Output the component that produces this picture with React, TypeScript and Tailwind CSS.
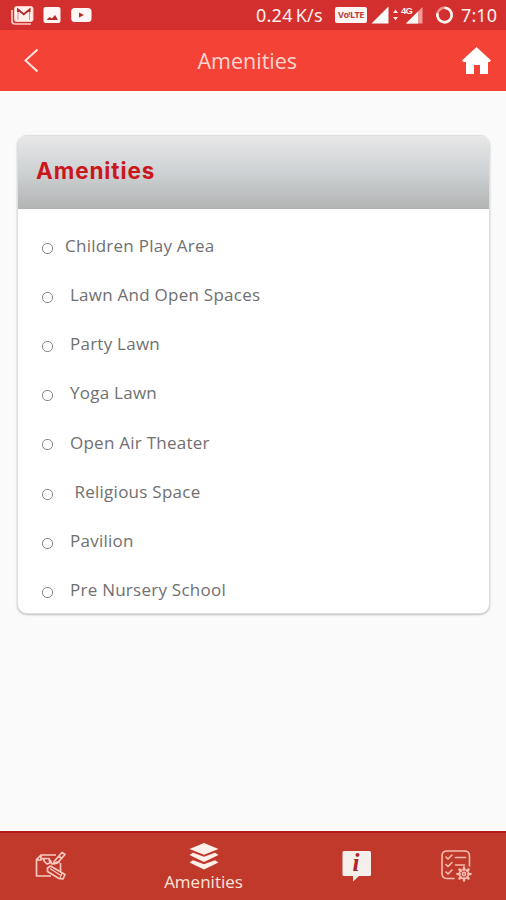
const amenities = [
  { label: 'Children Play Area', pad: 'pl-[12px]' },
  { label: 'Lawn And Open Spaces', pad: 'pl-[17px]' },
  { label: 'Party Lawn', pad: 'pl-[17px]' },
  { label: 'Yoga Lawn', pad: 'pl-[17px]' },
  { label: 'Open Air Theater', pad: 'pl-[17px]' },
  { label: 'Religious Space', pad: 'pl-[21.5px]' },
  { label: 'Pavilion', pad: 'pl-[17px]' },
  { label: 'Pre Nursery School', pad: 'pl-[17px]' },
];

function StatusBar() {
  return (
    <div className="flex h-[30px] shrink-0 items-center bg-[#d32f2f] pl-[11px] text-[#fff0ee]">
      <svg width="24" height="20" viewBox="0 0 24 20" className="shrink-0">
        <path d="M1 5v11q0 3 3 3h16" fill="none" stroke="#ffc9c5" strokeWidth="1.7" />
        <rect x="3.5" y="1.5" width="18.5" height="15" rx="2" fill="#fff0ee" stroke="#ffc9c5" />
        <path d="M7 7V4.500l5.800 4.700 5.800-4.700V7" fill="none" stroke="#b52a2a" strokeWidth="2" />
        <path d="M7 7v8M18.600 7v8" fill="none" stroke="#d98583" strokeWidth="1" />
      </svg>
      <svg width="18" height="18" viewBox="0 0 18 18" className="ml-[8px] shrink-0">
        <rect x="0.5" y="1" width="17" height="16" rx="2" fill="#fff7f5" />
        <path d="M3.500 14l3-3 2.500 1.500 3-3.500 3 5z" fill="#b52a2a" />
      </svg>
      <svg width="21" height="16" viewBox="0 0 21 16" className="ml-[10px] shrink-0">
        <rect x="0.2" y="1" width="20.3" height="14" rx="3.5" fill="#fff7f5" />
        <path d="M8 5.500l5 2.500-5 2.500z" fill="#b52a2a" />
      </svg>
      <span className="ml-[164px] w-[68px] whitespace-nowrap text-[18px] tracking-[0.25px] [word-spacing:-2px]">0.24 K/s</span>
      <div className="ml-[11px] flex h-[16px] w-[32px] shrink-0 items-center justify-center rounded-[2px] bg-[#fff7f5] text-[9px] font-bold tracking-[-0.4px] text-[#b84040]">
        VoᵎLTE
      </div>
      <svg width="19" height="20" viewBox="0 0 19 20" className="ml-[4px] shrink-0">
        <path d="M0.500 18.500L17.500 1.500v17z" fill="#fffdfb" />
      </svg>
      <svg width="5" height="14" viewBox="0 0 5 14" className="ml-[3px] shrink-0">
        <path d="M0 5l2.500-3.500L5 5zM0 9l2.500 3.500L5 9z" fill="#ffe1de" />
      </svg>
      <div className="relative ml-[3px] h-[20px] w-[24px] shrink-0">
        <svg width="24" height="20" viewBox="0 0 24 20">
          <path d="M5 18.500L21.500 2v16.500z" fill="#f19b96" />
          <path d="M5 18.500L17 6.500v12z" fill="#fffdfb" />
        </svg>
        <span className="absolute left-0 top-px font-['Liberation_Sans',sans-serif] text-[9.500px] font-bold leading-[10px] tracking-[-0.8px]">4G</span>
      </div>
      <svg width="19" height="20" viewBox="0 0 19 20" className="ml-[10px] shrink-0">
        <circle cx="9.500" cy="10" r="7.200" fill="none" stroke="#ef918b" strokeWidth="2.500" />
        <path d="M9.500 2.800a7.200 7.200 0 1 1-7 5.600" fill="none" stroke="#fff3f0" strokeWidth="2.600" />
      </svg>
      <span className="ml-[7px] whitespace-nowrap text-[18px] tracking-[0.1px]">7:10</span>
    </div>
  );
}

function PlanIcon() {
  return (
    <svg width="32" height="32" viewBox="0 0 32 32" fill="none" stroke="#f8cabf" strokeWidth="1.700" strokeLinejoin="round">
      <path d="M16 26H1.500V9.500L6 5h15M1.500 10H6V5M25.500 13v9" />
      <path d="M9 8.500h5l1 4.500-3 1-3-3zM15 10l2 4 5-2h3M7 8l2 2" />
      <path d="M19 11.500l8-9 3 2-7.500 8.500-3.500 1zM24 6l3 3" />
      <path d="M12.500 18l3-2 14.500 8.500-2 4.500-4-.5-11.500-7z" />
      <path d="M15 18.500l11 7M25 28l2-5" strokeWidth="1.200" />
    </svg>
  );
}

function LayersIcon() {
  return (
    <svg width="30" height="28" viewBox="0 0 30 28" fill="#fff0e9">
      <path d="M15 0l14.500 6L15 11.800.5 6z" />
      <path d="M.5 12l3.500-2.200 11 4 11-4 3.500 2.200L15 19z" />
      <path d="M.5 19.500L4 17.300l11 4 11-4 3.500 2.200L15 26.500z" />
    </svg>
  );
}

function InfoIcon() {
  return (
    <div className="relative h-[31px] w-[30px]">
      <svg width="30" height="31" viewBox="0 0 30 31">
        <path d="M2 0h25.500q1.500 0 1.500 1.500v22q0 1.500-1.500 1.500H17l-6 5.500V25H2q-1.500 0-1.500-1.500v-22Q.5 0 2 0z" fill="#f5efec" />
      </svg>
      <span className="absolute left-[11px] top-[-1px] font-['Liberation_Serif',serif] text-[25px] font-bold italic leading-[25px] text-[#b02227]">i</span>
    </div>
  );
}

function ChecklistIcon() {
  return (
    <svg width="32" height="32" viewBox="0 0 32 32" fill="none" stroke="#f8bdb0" strokeWidth="1.600" strokeLinecap="round" strokeLinejoin="round">
      <path d="M14 28.500H7q-5 0-5-5V6q0-5 5-5h17.500q5 0 5 5v10" />
      <path d="M6 7l2 2 4-4M6 14.500l2 2 4-4M6 22l2 2 4-4M15.500 7.500h10M15.500 15h9" />
      <circle cx="24" cy="24" r="4.500" />
      <circle cx="24" cy="24" r="1.600" />
      <path d="M24 17.500v2M24 28.500v2M17.500 24h2M28.500 24h2M19.500 19.500l1.300 1.300M27.200 27.200l1.300 1.300M28.500 19.500l-1.300 1.300M20.800 27.200l-1.300 1.300" strokeWidth="2.500" />
    </svg>
  );
}

export default function App() {
  return (
    <div className="flex h-[900px] w-[506px] flex-col overflow-hidden bg-[#fafafa] font-['Noto_Sans',sans-serif]">
      <StatusBar />
      <header className="flex h-[61px] shrink-0 items-center bg-[#f44336] pl-[23px] pr-[14px]">
        <svg width="16" height="25" viewBox="0 0 16 25" className="shrink-0">
          <path d="M14.500 1.500L2.500 12.500l12 11" fill="none" stroke="#ffe4de" strokeWidth="2" />
        </svg>
        <h1 className="ml-[158.5px] flex-1 whitespace-nowrap pt-[2px] font-['Open_Sans',sans-serif] text-[21.500px] text-[#ffd6cf]">Amenities</h1>
        <svg width="31" height="29" viewBox="0 0 31 29" className="shrink-0">
          <path d="M15.500 1L30 14.500 28.500 16H27v12h-8v-9h-6v9H5V16H2.500L1 14.500z" fill="#fff" />
        </svg>
      </header>
      <main className="flex-1 pl-[17px] pr-[16px] pt-[44px]">
        <section className="h-[479px] overflow-hidden rounded-[10px] border border-[#dedede] bg-white shadow-[0_1px_2px_#bbbbbb]">
          <div className="flex h-[73px] items-center border-b border-[#b2b2b2] bg-linear-to-b from-[#e7e7e7] via-[#ced2d4] to-[#b3b4b4] pb-[3px] pl-[18px]">
            <h2 className="font-['Inter',sans-serif] text-[22.500px] font-bold leading-[30px] tracking-[0.900px] text-[#cc161c]">Amenities</h2>
          </div>
          <ul className="pt-[12px] font-['Open_Sans',sans-serif] text-[17px] tracking-[0.250px] text-[#707070]">
            {amenities.map(({ label, pad }) => (
              <li key={label} className="flex h-[49.200px] items-center pl-[24px]">
                <span className="mt-[5px] size-[11px] shrink-0 rounded-[5px] border border-[#888]" />
                <span className={pad}>{label}</span>
              </li>
            ))}
          </ul>
        </section>
      </main>
      <nav className="flex h-[69px] shrink-0 border-t-2 border-[#b41818] bg-[#c0392b]">
        <div className="flex w-[101px] items-start justify-center pt-[17px]"><PlanIcon /></div>
        <div className="flex w-[205px] flex-col items-center pt-[10px]">
          <LayersIcon />
          <span className="font-['Open_Sans',sans-serif] text-[17px] leading-[22px] text-[#ffe5dc]">Amenities</span>
        </div>
        <div className="flex w-[101px] items-start justify-center pt-[18px]"><InfoIcon /></div>
        <div className="flex flex-1 items-start justify-center pr-px pt-[17px]"><ChecklistIcon /></div>
      </nav>
    </div>
  );
}
